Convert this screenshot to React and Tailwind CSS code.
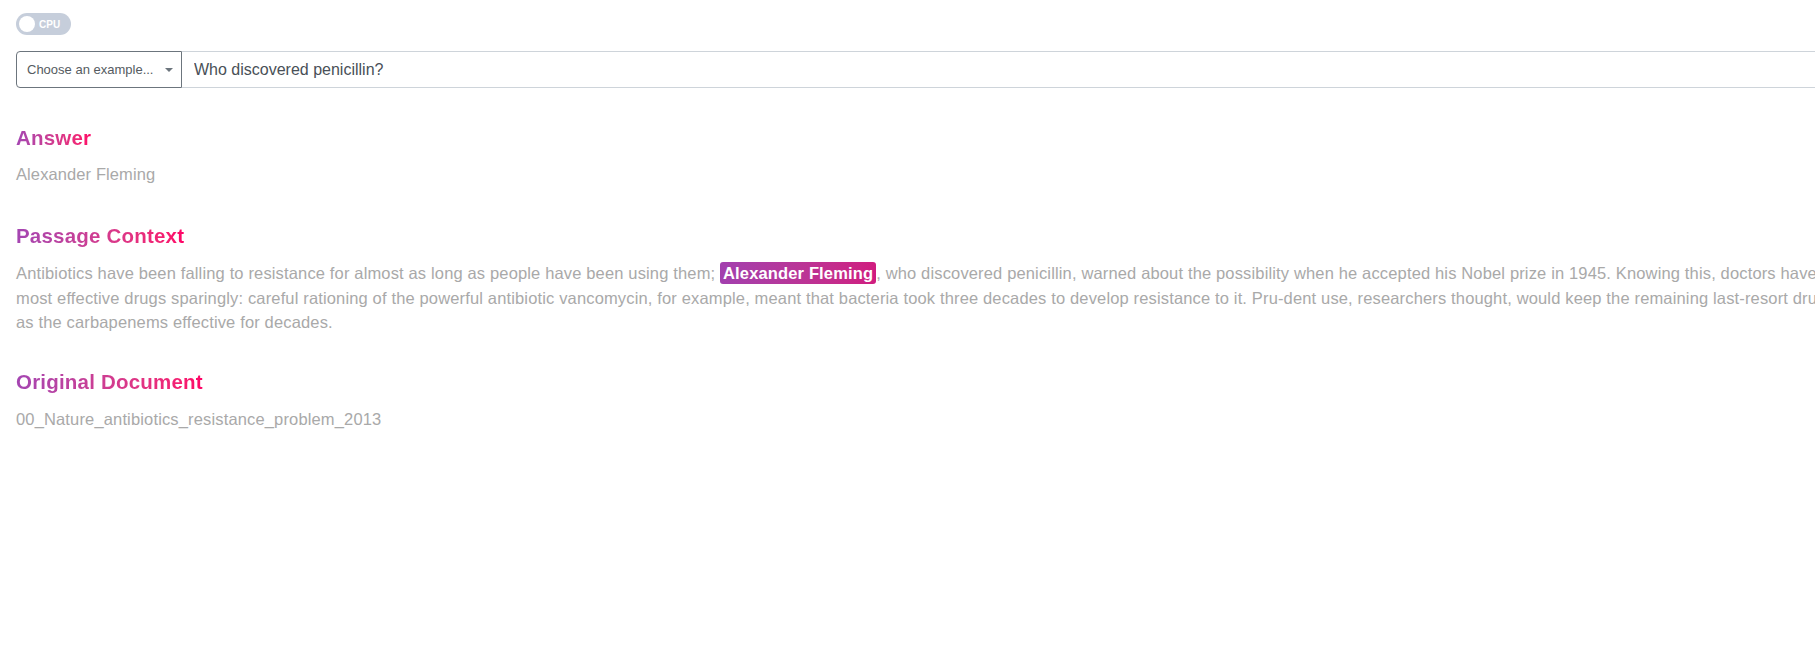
import React from 'react';

const passage = {
  before:
    'Antibiotics have been falling to resistance for almost as long as people have been using them; ',
  answer: 'Alexander Fleming',
  after:
    ', who discovered penicillin, warned about the possibility when he accepted his Nobel prize in 1945. Knowing this, doctors have used the most effective drugs sparingly: careful rationing of the powerful antibiotic vancomycin, for example, meant that bacteria took three decades to develop resistance to it. Pru-dent use, researchers thought, would keep the remaining last-resort drugs such as the carbapenems effective for decades.',
};

const Heading = ({ children }) => (
  <h3 className="inline-block bg-linear-to-r from-[#a445b2] to-[#ff0066] bg-clip-text text-transparent text-[20.5px] leading-6 font-bold tracking-[0.2px]">
    {children}
  </h3>
);

export default function App() {
  return (
    <div className="w-[1815px] h-[669px] overflow-hidden bg-white font-['Liberation_Sans',Arial,sans-serif]">
      <div className="w-[1888px] pl-4 pt-[13px]">
        {/* CPU / GPU toggle */}
        <div className="flex h-[22px] w-[55px] items-center rounded-full bg-[#c6cedb] px-[3px]">
          <span className="h-4 w-4 rounded-full bg-white" />
          <span className="ml-[4px] text-[10px] font-bold text-white">CPU</span>
        </div>

        {/* Question input */}
        <div className="mt-4 flex h-[37px]">
          <button className="flex w-[166px] shrink-0 items-center justify-between rounded-l-[4px] border border-[#6c757d] pl-[10px] pr-[8px] text-[13px] text-[#555b61]">
            Choose an example...
            <svg width="8" height="4" viewBox="0 0 8 4" className="ml-1">
              <path d="M0 0h8L4 4z" fill="#6c757d" />
            </svg>
          </button>
          <input
            readOnly
            value="Who discovered penicillin?"
            className="flex-1 border-y border-[#ced4da] px-3 text-base text-[#495057] outline-none"
          />
        </div>

        {/* Answer */}
        <div className="mt-[38px]">
          <Heading>Answer</Heading>
          <p className="mt-[10px] text-[16.5px] leading-[24.25px] tracking-[0.1px] text-[#a9a9a9]">Alexander Fleming</p>
        </div>

        {/* Passage */}
        <div className="mt-[38px]">
          <Heading>Passage Context</Heading>
          <p className="mt-[11px] text-[16.5px] leading-[24.25px] tracking-[0.15px] text-[#a9a9a9]">
            {passage.before}
            <span className="rounded-[3px] bg-linear-to-r from-[#a23fae] to-[#d01c7f] px-[3px] py-[2px] font-bold text-white">
              {passage.answer}
            </span>
            {passage.after}
          </p>
        </div>

        {/* Original document */}
        <div className="mt-9">
          <Heading>Original Document</Heading>
          <p className="mt-[11px] text-[16.5px] leading-[24.25px] tracking-[0.15px] text-[#a9a9a9]">
            00_Nature_antibiotics_resistance_problem_2013
          </p>
        </div>
      </div>
    </div>
  );
}
